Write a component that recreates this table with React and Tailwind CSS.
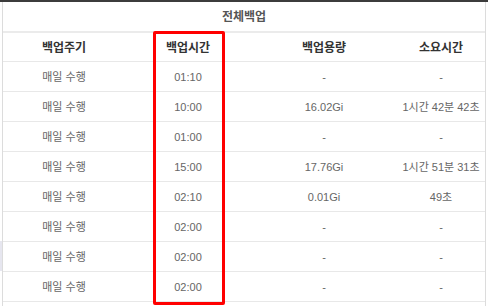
import React from "react";

const rows = [
    { cycle: "매일 수행", time: "01:10", size: "-", took: "-" },
    { cycle: "매일 수행", time: "10:00", size: "16.02Gi", took: "1시간 42분 42초" },
    { cycle: "매일 수행", time: "01:00", size: "-", took: "-" },
    { cycle: "매일 수행", time: "15:00", size: "17.76Gi", took: "1시간 51분 31초" },
    { cycle: "매일 수행", time: "02:10", size: "0.01Gi", took: "49초" },
    { cycle: "매일 수행", time: "02:00", size: "-", took: "-" },
    { cycle: "매일 수행", time: "02:00", size: "-", took: "-" },
    { cycle: "매일 수행", time: "02:00", size: "-", took: "-" },
];

const font = { fontFamily: '"Liberation Sans", "Noto Sans CJK KR", sans-serif' };

export default function App() {
    return (
        <div
            className="relative w-[488px] h-[306px] bg-white overflow-hidden"
            style={font}
        >
            {/* top bar */}
            <div className="h-[2px] bg-[#3c3c3c]" />

            <div className="flex">
                {/* left gutter */}
                <div className="w-[2px] flex flex-col">
                    <div className="h-[239px]" />
                    <div className="h-[30px] bg-[#e6e6ef]" />
                </div>

                <div className="w-[484px] h-[304px] border-l border-r border-[#dcdcdc]">
                    {/* title */}
                    <div className="h-[31px] flex items-center justify-center text-[12px] font-bold text-[#555] border-b-2 border-[#ebebeb]">
                        전체백업
                    </div>

                    {/* header */}
                    <div className="grid grid-cols-[122px_126px_146px_88px] h-[29px] pt-[1px] border-b border-[#e8e8e8] text-[12px] font-bold text-[#333]">
                        <div className="flex items-center justify-center">백업주기</div>
                        <div className="flex items-center justify-center">백업시간</div>
                        <div className="flex items-center justify-center">백업용량</div>
                        <div className="flex items-center justify-center">소요시간</div>
                    </div>

                    {rows.map((r, i) => (
                        <div
                            key={i}
                            className="grid grid-cols-[122px_126px_146px_88px] h-[30px] pt-[2px] border-b border-[#e8e8e8] text-[11px] text-[#666]"
                        >
                            <div className="flex items-center justify-center">{r.cycle}</div>
                            <div className="flex items-center justify-center">{r.time}</div>
                            <div className="flex items-center justify-center">{r.size}</div>
                            <div className="flex items-center justify-center whitespace-nowrap">
                                {r.took}
                            </div>
                        </div>
                    ))}
                </div>
            </div>

            {/* highlight box */}
            <div className="absolute left-[153px] top-[31px] w-[72px] h-[274px] border-[3px] border-[#ff0000] rounded-[2px]" />
        </div>
    );
}
